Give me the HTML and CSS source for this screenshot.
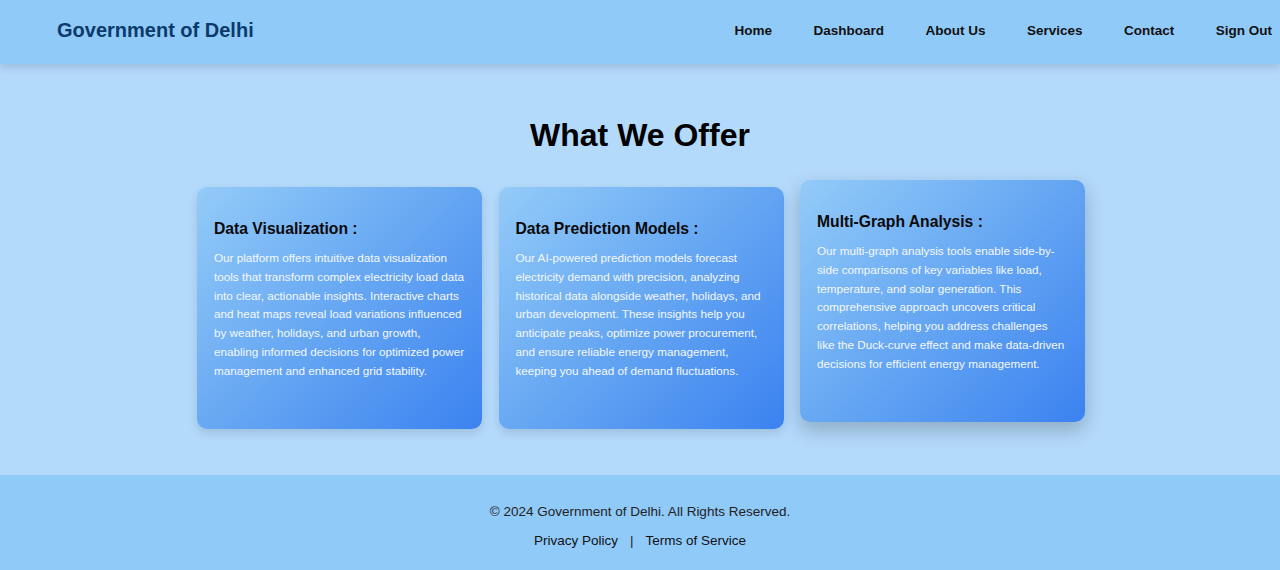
FILE: index.html
```html
<!DOCTYPE html>
<html lang="en">
<head>
<meta charset="utf-8">
<title>Government of Delhi</title>
<link rel="stylesheet" href="styles.css">
</head>
<body>
<header class="site-header">
  <div class="brand">Government of Delhi</div>
  <nav class="nav">
    <a href="#">Home</a>
    <a href="#">Dashboard</a>
    <a href="#">About Us</a>
    <a href="#">Services</a>
    <a href="#">Contact</a>
    <a href="#">Sign Out</a>
  </nav>
</header>
<main class="offer">
  <h2 class="offer-title">What We Offer</h2>
  <div class="cards">
    <div class="card">
      <h3>Data Visualization :</h3>
      <p>Our platform offers intuitive data visualization tools that transform complex electricity load data into clear, actionable insights. Interactive charts and heat maps reveal load variations influenced by weather, holidays, and urban growth, enabling informed decisions for optimized power management and enhanced grid stability.</p>
    </div>
    <div class="card">
      <h3>Data Prediction Models :</h3>
      <p>Our AI-powered prediction models forecast electricity demand with precision, analyzing historical data alongside weather, holidays, and urban development. These insights help you anticipate peaks, optimize power procurement, and ensure reliable energy management, keeping you ahead of demand fluctuations.</p>
    </div>
    <div class="card card-active">
      <h3>Multi-Graph Analysis :</h3>
      <p>Our multi-graph analysis tools enable side-by-side comparisons of key variables like load, temperature, and solar generation. This comprehensive approach uncovers critical correlations, helping you address challenges like the Duck-curve effect and make data-driven decisions for efficient energy management.</p>
    </div>
  </div>
</main>
<footer class="site-footer">
  <p class="copy">© 2024 Government of Delhi. All Rights Reserved.</p>
  <p class="links"><a href="#">Privacy Policy</a><span class="sep">|</span><a href="#">Terms of Service</a></p>
</footer>
</body>
</html>
```
FILE: styles.css
```css
* { box-sizing: border-box; }
html, body { margin: 0; padding: 0; }
body {
  font-family: "Liberation Sans", Arial, sans-serif;
  background: #b3d9fb;
  color: #111;
}
.site-header {
  height: 64px;
  background: #90caf9;
  display: flex;
  align-items: center;
  justify-content: space-between;
  padding: 0 8px 4px 57px;
  box-shadow: 0 4px 8px rgba(0, 0, 0, 0.12);
  position: relative;
  z-index: 1;
}
.brand {
  font-size: 20px;
  font-weight: bold;
  color: #0b3a6b;
}
.nav {
  display: flex;
  gap: 41.5px;
}
.nav a {
  font-size: 13.5px;
  font-weight: bold;
  color: #111;
  text-decoration: none;
}
.offer {
  padding: 53px 0 46px;
  text-align: center;
}
.offer-title {
  margin: 0 0 33px;
  font-size: 32px;
  line-height: 37px;
  font-weight: bold;
  color: #000;
}
.cards {
  display: flex;
  justify-content: center;
  gap: 16.5px;
  margin-left: 2px;
}
.card {
  width: 285px;
  height: 242px;
  padding: 17px;
  text-align: left;
  border-radius: 10px;
  background: linear-gradient(135deg, #93cbf8 0%, #6aaaf3 45%, #3b82f0 100%);
  box-shadow: 0 4px 10px rgba(0, 0, 0, 0.12);
}
.card-active {
  transform: translateY(-7px);
  box-shadow: 0 8px 20px rgba(0, 0, 0, 0.22);
}
.card h3 {
  margin: 16px 0 11px;
  font-size: 15.7px;
  line-height: 18px;
  font-weight: bold;
  color: #0a0a0a;
}
.card p {
  margin: 0;
  font-size: 11.7px;
  line-height: 18.8px;
  color: #f4f8ff;
}
.site-footer {
  background: #90caf9;
  height: 95px;
  padding-top: 29px;
  text-align: center;
  font-size: 13.5px;
  color: #222;
}
.site-footer p { margin: 0; line-height: 16px; }
.site-footer .links { margin-top: 13px; }
.site-footer a { color: #111; text-decoration: none; }
.sep { margin: 0 12px; }
```
